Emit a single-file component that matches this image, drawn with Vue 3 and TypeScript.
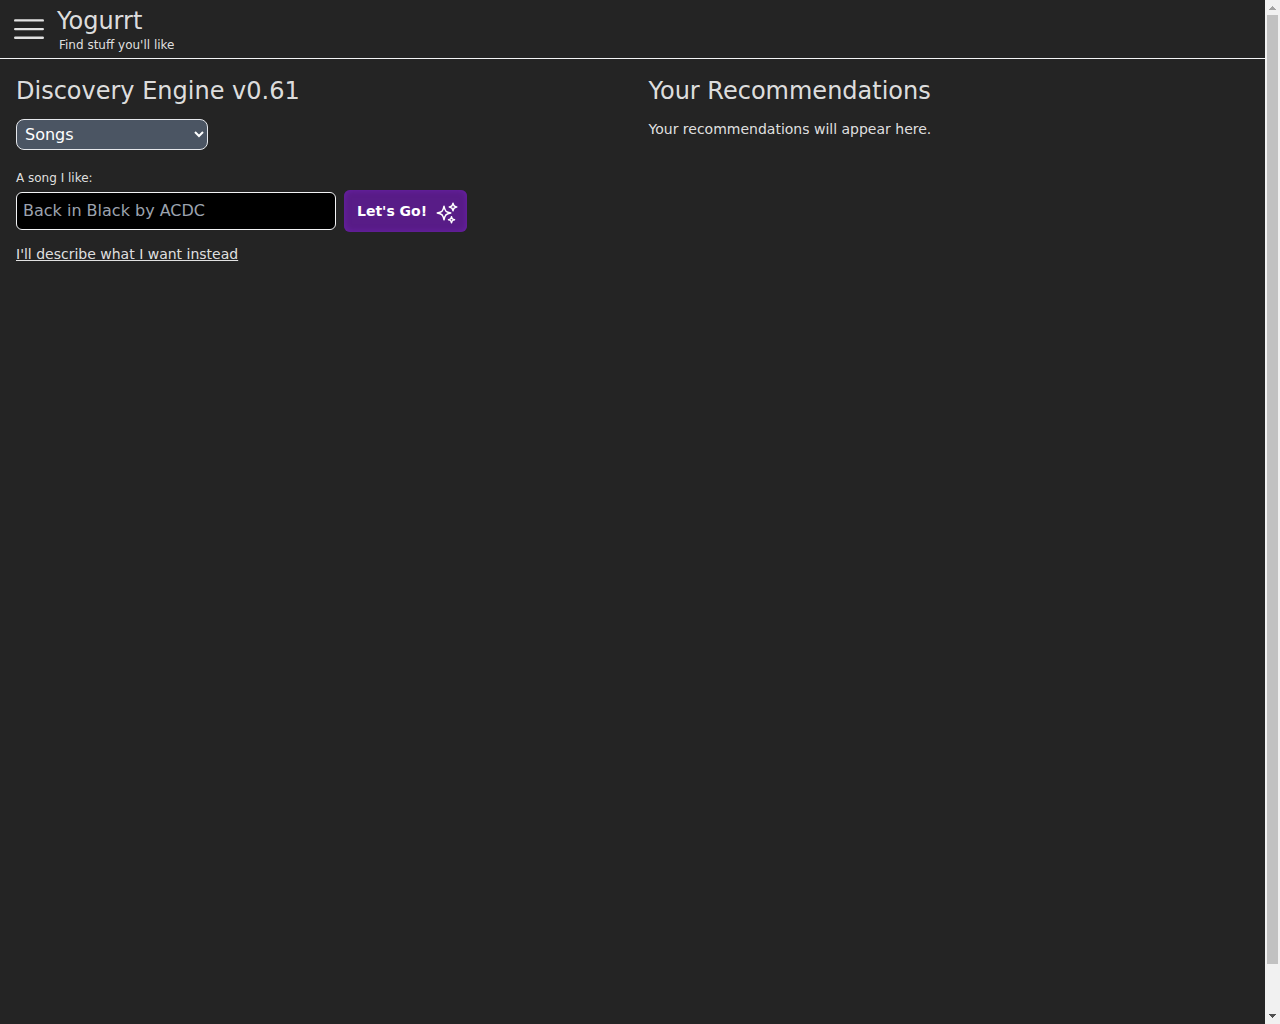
<script setup lang="ts">
import { ref } from 'vue'

const categories: string[] = ['Songs', 'Movies', 'Books', 'TV Shows']
const category = ref('Songs')
const liked = ref('')
</script>

<template>
  <div class="shell">
    <div class="page">
      <header class="topbar">
        <button class="menu" type="button" aria-label="Open menu">
          <svg width="30" height="22" viewBox="0 0 30 22" fill="none" stroke="currentColor" stroke-width="2.4" stroke-linecap="round" aria-hidden="true">
            <path d="M1.2 2.4h27.6M1.2 11.1h27.6M1.2 19.8h27.6" />
          </svg>
        </button>
        <div class="brand">
          <div class="name">Yogurrt</div>
          <div class="tagline">Find stuff you'll like</div>
        </div>
      </header>
      <main class="columns">
        <section class="column">
          <h1 class="title">Discovery Engine v0.61</h1>
          <select v-model="category" class="category" aria-label="Category">
            <option v-for="c in categories" :key="c">{{ c }}</option>
          </select>
          <form class="search" @submit.prevent>
            <label class="hint" for="liked">A song I like:</label>
            <div class="row">
              <input id="liked" v-model="liked" class="field" type="text" placeholder="Back in Black by ACDC" />
              <button class="go" type="submit">
                <span>Let's Go!</span>
                <svg class="sparkles" width="24" height="24" viewBox="0 0 24 24" fill="none" stroke="currentColor" stroke-width="1.5" stroke-linecap="round" stroke-linejoin="round" aria-hidden="true">
                  <path d="M9.813 15.904L9 18.75l-.813-2.846a4.5 4.5 0 00-3.09-3.09L2.25 12l2.846-.813a4.5 4.5 0 003.09-3.09L9 5.25l.813 2.846a4.5 4.5 0 003.09 3.09L15.75 12l-2.846.813a4.5 4.5 0 00-3.09 3.09zM18.259 8.715L18 9.75l-.259-1.035a3.375 3.375 0 00-2.455-2.456L14.25 6l1.036-.259a3.375 3.375 0 002.455-2.456L18 2.25l.259 1.035a3.375 3.375 0 002.456 2.456L21.75 6l-1.035.259a3.375 3.375 0 00-2.456 2.456zM16.894 20.567L16.5 21.75l-.394-1.183a2.25 2.25 0 00-1.423-1.423L13.5 18.75l1.183-.394a2.25 2.25 0 001.423-1.423l.394-1.183.394 1.183a2.25 2.25 0 001.423 1.423l1.183.394-1.183.394a2.25 2.25 0 00-1.423 1.423z" />
                </svg>
              </button>
            </div>
          </form>
          <a class="switch" href="#describe">I'll describe what I want instead</a>
        </section>
        <section class="column">
          <h2 class="title">Your Recommendations</h2>
          <p class="empty">Your recommendations will appear here.</p>
        </section>
      </main>
    </div>
    <div class="scrollbar" aria-hidden="true">
      <svg class="arrow" width="15" height="15" viewBox="0 0 15 15" fill="#a3a3a3" shape-rendering="crispEdges">
        <path d="M7 6h1v1h1v1h1v1h1v1H4V9h1V8h1V7h1z" />
      </svg>
      <div class="track">
        <div class="thumb"></div>
      </div>
      <svg class="arrow" width="15" height="15" viewBox="0 0 15 15" fill="#505050" shape-rendering="crispEdges">
        <path d="M4 5h7v1h-1v1H9v1H8v1H7V8H6V7H5V6H4z" />
      </svg>
    </div>
  </div>
</template>

<style>
body {
  background: #242424;
}
</style>

<style scoped>
.shell,
.shell * {
  box-sizing: border-box;
}
.shell {
  display: flex;
  min-height: 100vh;
  color: rgba(255, 255, 255, 0.87);
  font-family: "DejaVu Sans", sans-serif;
  font-size: 14px;
  line-height: 20px;
}
.page {
  flex: 1;
  min-width: 0;
}
.topbar {
  display: flex;
  align-items: center;
  gap: 13px;
  height: 59px;
  padding: 0 14px;
  border-bottom: 1px solid #f3f4f6;
}
.menu {
  display: flex;
  padding: 0;
  border: 0;
  background: none;
  color: inherit;
}
.name {
  font-size: 24px;
  line-height: 32px;
}
.tagline {
  padding-left: 2px;
  font-size: 12px;
  line-height: 16px;
}
.columns {
  display: grid;
  grid-template-columns: 1fr 1fr;
}
.column {
  padding: 16px;
}
.title {
  margin: 0 0 12px;
  font-size: 24px;
  font-weight: 400;
  line-height: 32px;
}
.category {
  display: block;
  width: 192px;
  height: 31px;
  padding: 0 4px;
  border: 1px solid #e5e7eb;
  border-radius: 8px;
  background: #4b5563;
  color: #fff;
  font: inherit;
  font-size: 16px;
}
.search {
  margin: 20px 0 12px;
}
.hint {
  display: block;
  font-size: 12px;
  line-height: 16px;
}
.row {
  display: flex;
  align-items: center;
  gap: 8px;
  margin-top: 4px;
}
.field {
  width: 320px;
  height: 38px;
  padding: 0 6px 2px;
  border: 1px solid #f3f4f6;
  border-radius: 6px;
  background: #000;
  color: #fff;
  font: inherit;
  font-size: 16px;
}
.field::placeholder {
  color: #9ca3af;
}
.go {
  display: flex;
  align-items: center;
  gap: 8px;
  height: 42px;
  padding: 0 8px 0 13px;
  border: 0;
  border-radius: 6px;
  background: #581c87;
  box-shadow: inset 0 0 6px #6b21a8;
  color: #fff;
  font: inherit;
  font-weight: 700;
}
.sparkles {
  margin-top: 4px;
}
.switch {
  color: inherit;
  text-decoration: underline;
}
.empty {
  margin: 0;
}
.scrollbar {
  display: flex;
  flex-direction: column;
  flex: none;
  width: 15px;
  background: #f1f1f1;
}
.arrow {
  display: block;
  flex: none;
}
.track {
  display: flex;
  flex: 1;
  flex-direction: column;
  padding: 0 2px;
}
.thumb {
  flex: 0 0 calc(100vh - 75px);
  background: #c1c1c1;
}
</style>
